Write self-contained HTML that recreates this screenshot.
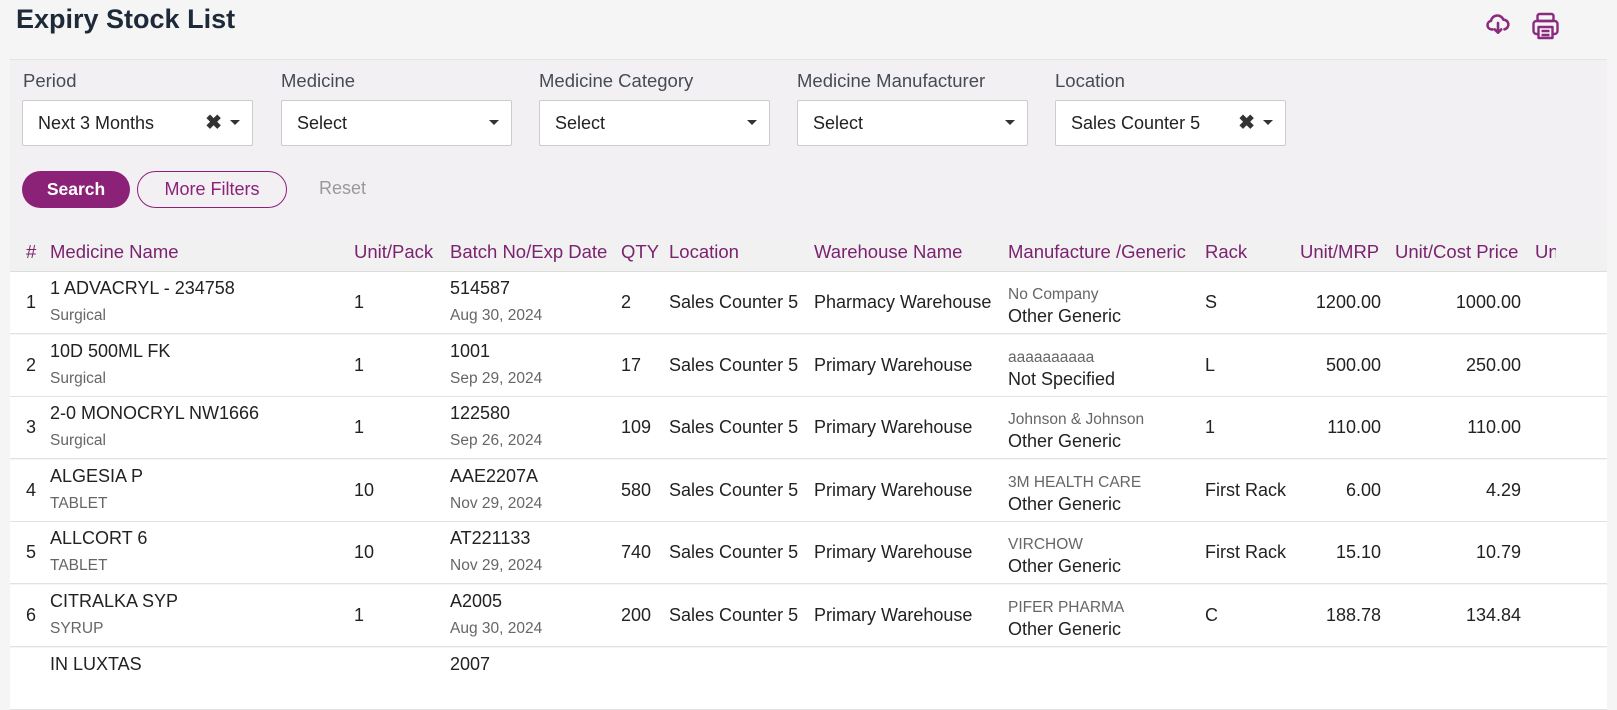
<!DOCTYPE html><html><head><style>
body{margin:0;width:1617px;height:683px;overflow:hidden;background:#f5f5f5;font-family:"Liberation Sans",Arial,sans-serif;color:#222;position:relative}
.a{position:absolute;white-space:nowrap}
h1{position:absolute;left:16px;top:4px;margin:0;font-size:27px;font-weight:bold;color:#1e2a3a}
.panel{position:absolute;left:10px;top:59px;width:1597px;height:172px;background:#f3f0f3;border-top:1px solid #e4e4e4}
.lbl{font-size:18.5px;color:#444c56;top:70px}
.sel{position:absolute;top:100px;width:229px;height:44px;background:#fff;border:1px solid #ccc;border-radius:2px;font-size:18px;color:#222}
.sel span{position:absolute;left:15px;top:12px}
.sel .c{position:absolute;right:12px;top:19px;width:0;height:0;border-left:5px solid transparent;border-right:5px solid transparent;border-top:5px solid #333}
.sel .x{position:absolute;right:30px;top:9px;font-size:20px;font-weight:bold;color:#333}
.th{position:absolute;left:10px;top:232px;width:1597px;height:39px;background:#f1f1f1;border-bottom:1px solid #ddd}
.h{font-size:18.5px;color:#7b2270;top:241px}
.row{position:absolute;left:10px;width:1597px;height:62px;box-sizing:border-box;background:#fff;border-bottom:1px solid #e2e2e2}
.m{font-size:18px;color:#222}
.s{font-size:15.5px;color:#666}
</style></head><body>
<h1>Expiry Stock List</h1>
<svg class="a" style="left:1485px;top:11px" width="26" height="26" viewBox="0 0 24 24" fill="none" stroke="#8b2a7f" stroke-width="2.4" stroke-linecap="round" stroke-linejoin="round"><path d="M7 17H6a4 4 0 0 1-.5-7.9A6 6 0 0 1 17 8a4.5 4.5 0 0 1 1 8.9"/><path d="M12 11v9M9 17l3 3 3-3"/></svg>
<svg class="a" style="left:1531px;top:11px" width="29" height="30" viewBox="0 0 28 30" fill="none" stroke="#8b2a7f" stroke-width="2.4" stroke-linejoin="round"><rect x="6" y="3" width="16" height="7" rx="2"/><rect x="2" y="10" width="24" height="13" rx="3"/><rect x="7" y="16" width="14" height="11" fill="#f5f5f5"/><path d="M10 20h8M10 24h8"/></svg>
<div class="panel"></div>
<div class="a lbl" style="left:23px">Period</div>
<div class="a lbl" style="left:281px">Medicine</div>
<div class="a lbl" style="left:539px">Medicine Category</div>
<div class="a lbl" style="left:797px">Medicine Manufacturer</div>
<div class="a lbl" style="left:1055px">Location</div>
<div class="sel" style="left:22px"><span>Next 3 Months</span><b class="x">✖</b><i class="c"></i></div>
<div class="sel" style="left:281px"><span>Select</span><i class="c"></i></div>
<div class="sel" style="left:539px"><span>Select</span><i class="c"></i></div>
<div class="sel" style="left:797px"><span>Select</span><i class="c"></i></div>
<div class="sel" style="left:1055px"><span>Sales Counter 5</span><b class="x">✖</b><i class="c"></i></div>
<div class="a" style="left:22px;top:171px;width:108px;height:37px;border-radius:19px;background:#8b2278;color:#fff;font-weight:bold;font-size:17.5px;text-align:center;line-height:37px">Search</div>
<div class="a" style="left:137px;top:171px;width:148px;height:35px;border-radius:19px;border:1px solid #8b2278;color:#8b2278;font-size:18px;text-align:center;line-height:35px">More Filters</div>
<div class="a" style="left:319px;top:178px;font-size:18px;color:#999">Reset</div>
<div class="th"></div>
<div class="a h" style="left:26px">#</div><div class="a h" style="left:50px">Medicine Name</div><div class="a h" style="left:354px">Unit/Pack</div><div class="a h" style="left:450px">Batch No/Exp Date</div><div class="a h" style="left:621px">QTY</div><div class="a h" style="left:669px">Location</div><div class="a h" style="left:814px">Warehouse Name</div><div class="a h" style="left:1008px">Manufacture /Generic</div><div class="a h" style="left:1205px">Rack</div><div class="a h" style="left:1300px">Unit/MRP</div><div class="a h" style="left:1395px">Unit/Cost Price</div><div class="a h" style="left:1535px;width:21px;overflow:hidden">Unit</div>
<div id="rows"></div>
<script>
var d=[["1","1 ADVACRYL - 234758","Surgical","1","514587","Aug 30, 2024","2","Pharmacy Warehouse","No Company","Other Generic","S","1200.00","1000.00"],
["2","10D 500ML FK","Surgical","1","1001","Sep 29, 2024","17","Primary Warehouse","aaaaaaaaaa","Not Specified","L","500.00","250.00"],
["3","2-0 MONOCRYL NW1666","Surgical","1","122580","Sep 26, 2024","109","Primary Warehouse","Johnson &amp; Johnson","Other Generic","1","110.00","110.00"],
["4","ALGESIA P","TABLET","10","AAE2207A","Nov 29, 2024","580","Primary Warehouse","3M HEALTH CARE","Other Generic","First Rack","6.00","4.29"],
["5","ALLCORT 6","TABLET","10","AT221133","Nov 29, 2024","740","Primary Warehouse","VIRCHOW","Other Generic","First Rack","15.10","10.79"],
["6","CITRALKA SYP","SYRUP","1","A2005","Aug 30, 2024","200","Primary Warehouse","PIFER PHARMA","Other Generic","C","188.78","134.84"],
["","IN LUXTAS","","","2007","","","","","","","",""]];
var tops=[272,335,397,460,522,585,648];
var h="";d.forEach(function(r,i){var t=tops[i];h+='<div class="row" style="top:'+t+'px"></div>';
function a(x,y,c,s,st){h+='<div class="a '+c+'" style="left:'+x+'px;top:'+(t+y)+'px;'+(st||'')+'">'+s+'</div>';}
a(26,20,'m',r[0]);a(50,6,'m',r[1]);a(50,35,'s',r[2]);a(354,20,'m',r[3]);a(450,6,'m',r[4]);a(450,35,'s',r[5]);a(621,20,'m',r[6]);
if(r[6]){a(669,20,'m','Sales Counter 5');a(814,20,'m',r[7]);a(1008,14,'s',r[8]);a(1008,34,'m',r[9]);a(1205,20,'m',r[10]);
a(1281,20,'m',r[11],'width:100px;text-align:right');a(1421,20,'m',r[12],'width:100px;text-align:right');}});
document.getElementById('rows').innerHTML=h;
</script>
</body></html>
